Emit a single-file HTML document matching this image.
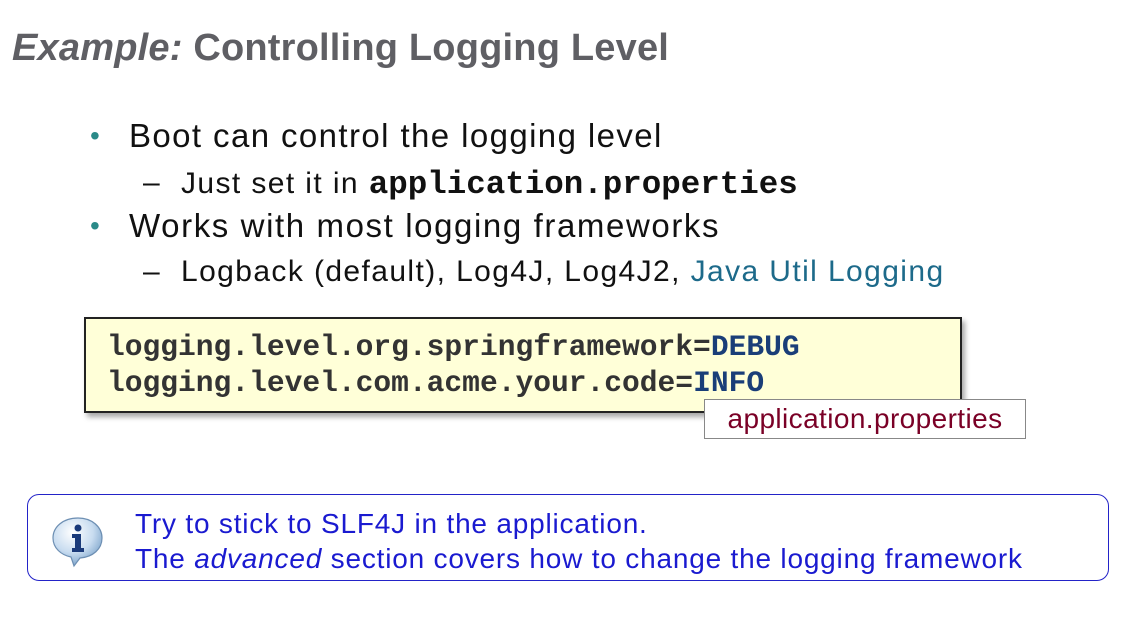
<!DOCTYPE html>
<html><head><meta charset="utf-8"><style>
body{margin:0;width:1142px;height:619px;background:#fff;position:relative;overflow:hidden;font-family:"Liberation Sans",sans-serif}
.a{position:absolute;white-space:nowrap}
.t{left:12px;top:27px;font-size:38px;font-weight:bold;color:#5f5f64;letter-spacing:0.2px}
.b{font-size:33px;color:#111;letter-spacing:1.4px}
.s{font-size:30px;color:#111;letter-spacing:1.4px}
.dot{color:#2a8a88;font-size:28px}
.m{font-family:"Liberation Mono",monospace;font-weight:bold;letter-spacing:0}
.code{left:84px;top:317px;width:874px;height:92px;background:#ffffd8;border:2px solid #222;box-shadow:3px 4px 5px rgba(0,0,0,.35)}
.cl{font-family:"Liberation Mono",monospace;font-weight:bold;font-size:29.6px;color:#333}
.kw{color:#1a3e78}
.lab{left:704px;top:399px;width:320px;height:38px;border:1px solid #888;background:#fff;color:#7a0026;font-size:28px;letter-spacing:0.4px;text-align:center;line-height:38px}
.info{left:27px;top:494px;width:1080px;height:85px;border:1.5px solid #2323c8;border-radius:12px}
.it{font-size:28px;color:#1a1ad0;letter-spacing:0.8px}
</style></head><body>
<div class="a t"><i>Example:</i> Controlling Logging Level</div>
<div class="a dot" style="left:90px;top:120px">•</div>
<div class="a b" style="left:129px;top:117px">Boot can control the logging level</div>
<div class="a s" style="left:143px;top:166px">–<span style="position:absolute;left:38px">Just set it in <span class="m" style="font-size:32.5px">application.properties</span></span></div>
<div class="a dot" style="left:90px;top:210px">•</div>
<div class="a b" style="left:129px;top:207px;letter-spacing:1.6px">Works with most logging frameworks</div>
<div class="a s" style="left:143px;top:255px">–<span style="position:absolute;left:38px">Logback (default), Log4J, Log4J2, <span style="color:#1d6a8a">Java Util Logging</span></span></div>
<div class="a code"></div>
<div class="a cl" style="left:107px;top:330px">logging.level.org.springframework=<span class="kw">DEBUG</span></div>
<div class="a cl" style="left:107px;top:366px">logging.level.com.acme.your.code=<span class="kw">INFO</span></div>
<div class="a lab">application.properties</div>
<div class="a info"></div>
<svg class="a" style="left:50px;top:515px" width="56" height="54" viewBox="0 0 56 54">
<defs><radialGradient id="g" cx="40%" cy="30%" r="70%"><stop offset="0" stop-color="#fff"/><stop offset=".6" stop-color="#c8dcf0"/><stop offset="1" stop-color="#7fa6cc"/></radialGradient></defs>
<path d="M28 3C13 3 3 12 3 23c0 10 8 17 18 19l3 9 6-8c13-1 22-9 22-20C52 12 42 3 28 3z" fill="url(#g)" stroke="#6d8fb3" stroke-width="1.2"/>
<circle cx="28" cy="13" r="3.5" fill="#1a3a7a"/>
<path d="M22 19h9v14h3v4H22v-4h3V23h-3z" fill="#1a3a7a"/>
</svg>
<div class="a it" style="left:135px;top:508px">Try to stick to SLF4J in the application.</div>
<div class="a it" style="left:135px;top:543px">The <i>advanced</i> section covers how to change the logging framework</div>
</body></html>
